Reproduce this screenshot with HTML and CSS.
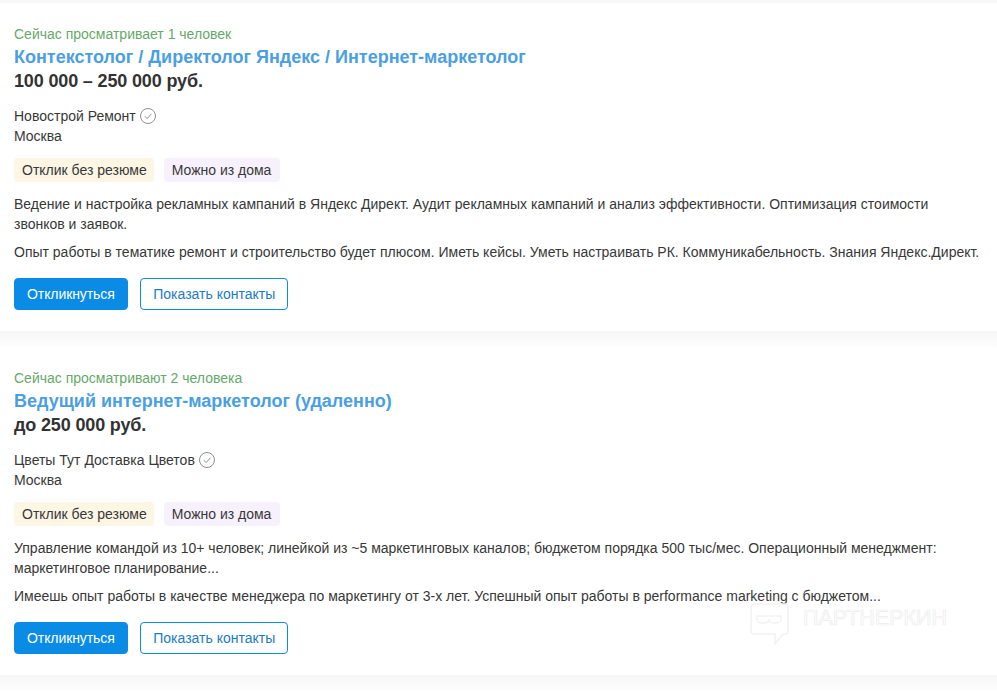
FILE: index.html
```html
<!DOCTYPE html>
<html lang="ru">
<head>
<meta charset="utf-8">
<title>Вакансии</title>
<link rel="stylesheet" href="styles.css">
</head>
<body>
<main class="list">
  <div class="top-edge"></div>
  <article class="card">
    <div class="viewers">Сейчас просматривает 1 человек</div>
    <a class="title">Контекстолог / Директолог Яндекс / Интернет-маркетолог</a>
    <div class="salary">100 000 – 250 000 руб.</div>
    <div class="company">Новострой Ремонт
      <svg class="check" viewBox="0 0 16 16"><circle cx="8" cy="8" r="7.5"/><path d="M4.800 8.200 7.200 10.600 11.400 5.800"/></svg>
    </div>
    <div class="city">Москва</div>
    <div class="tags"><span class="tag tag-y">Отклик без резюме</span><span class="tag tag-p">Можно из дома</span></div>
    <p class="desc first">Ведение и настройка рекламных кампаний в Яндекс Директ. Аудит рекламных кампаний и анализ эффективности. Оптимизация стоимости звонков и заявок.</p>
    <p class="desc">Опыт работы в тематике ремонт и строительство будет плюсом. Иметь кейсы. Уметь настраивать РК. Коммуникабельность. Знания Яндекс.Директ.</p>
    <div class="actions"><a class="btn btn-fill">Откликнуться</a><a class="btn btn-line">Показать контакты</a></div>
  </article>
  <div class="sep"></div>
  <article class="card">
    <div class="viewers">Сейчас просматривают 2 человека</div>
    <a class="title">Ведущий интернет-маркетолог (удаленно)</a>
    <div class="salary">до 250 000 руб.</div>
    <div class="company">Цветы Тут Доставка Цветов
      <svg class="check" viewBox="0 0 16 16"><circle cx="8" cy="8" r="7.5"/><path d="M4.800 8.200 7.200 10.600 11.400 5.800"/></svg>
    </div>
    <div class="city">Москва</div>
    <div class="tags"><span class="tag tag-y">Отклик без резюме</span><span class="tag tag-p">Можно из дома</span></div>
    <p class="desc first">Управление командой из 10+ человек; линейкой из ~5 маркетинговых каналов; бюджетом порядка 500 тыс/мес. Операционный менеджмент: маркетинговое планирование...</p>
    <p class="desc">Имеешь опыт работы в качестве менеджера по маркетингу от 3-х лет. Успешный опыт работы в performance marketing с бюджетом...</p>
    <div class="actions"><a class="btn btn-fill">Откликнуться</a><a class="btn btn-line">Показать контакты</a></div>
  </article>
  <div class="sep"></div>
</main>
<div class="watermark">
  <svg class="wm-icon" viewBox="0 0 40 42"><path d="M4 1H35a3 3 0 0 1 3 3V28a3 3 0 0 1-3 3H33L25 41V31H4a3 3 0 0 1-3-3V4A3 3 0 0 1 4 1Z"/><path d="M7 13H31V16a4 4 0 0 1-4 4H23a4 4 0 0 1-4-4 4 4 0 0 1-4 4H11a4 4 0 0 1-4-4Z"/></svg>
  <span class="wm-text">ПАРТНЕРКИН</span>
</div>
</body>
</html>
```
FILE: styles.css
```css
* { box-sizing: border-box; }
html, body { margin: 0; height: 100%; overflow: hidden; }
body {
  background: #fff;
  font-family: "Liberation Sans", Arial, sans-serif;
  font-size: 14px;
  line-height: 20px;
  color: #383838;
  position: relative;
}
.list {
  display: flex;
  flex-direction: column;
}
.top-edge {
  height: 3px;
  background: #f8f8f8;
}
.sep {
  height: 16px;
  background: linear-gradient(#f6f6f6, #fdfdfd);
}
.card {
  background: #fff;
  padding: 21px 16px 21px 14px;
  height: 328px;
}
.viewers { color: #66a96a; }
.title {
  display: block;
  font-size: 18px;
  font-weight: 700;
  line-height: 26px;
  color: #4a9fe3;
}
.salary {
  font-size: 18px;
  font-weight: 700;
  line-height: 22px;
  letter-spacing: -0.15px;
  color: #333;
}
.company {
  margin-top: 14px;
  display: flex;
  align-items: center;
  gap: 4px;
}
.check {
  width: 16px;
  height: 16px;
  fill: none;
  stroke: #8e8e8e;
  stroke-width: 1;
}
.tags {
  display: flex;
  margin-top: 12px;
}
.tag {
  height: 24px;
  line-height: 24px;
  padding: 0 8px;
  border-radius: 4px;
}
.tag-y { background: #fdf6e5; padding-right: 7.5px; margin-right: 9.5px; }
.tag-p { background: #f7f1fd; padding-right: 8.5px; }
.desc { margin: 8px 0 0; }
.desc.first { margin-top: 12px; }
.actions {
  display: flex;
  gap: 12px;
  margin-top: 16px;
}
.btn {
  height: 32px;
  line-height: 30px;
  border-radius: 4px;
  border: 1px solid #0a8ce6;
  padding: 0 12px;
}
.btn-fill { background: #0a8ce6; color: #fff; letter-spacing: -0.08px; }
.btn-line { background: #fff; color: #1a7cc4; padding: 0 11.5px 0 12.5px; }
.watermark {
  position: absolute;
  left: 750px;
  top: 603px;
  display: flex;
  gap: 13px;
  align-items: flex-start;
}
.wm-icon {
  width: 40px;
  height: 42px;
  fill: none;
  stroke: #f2f2f2;
  stroke-width: 1.500;
}
.wm-text {
  font-size: 21.500px;
  line-height: 28px;
  margin-top: 1px;
  color: transparent;
  -webkit-text-stroke: 0.7px #ececec;
}
```
